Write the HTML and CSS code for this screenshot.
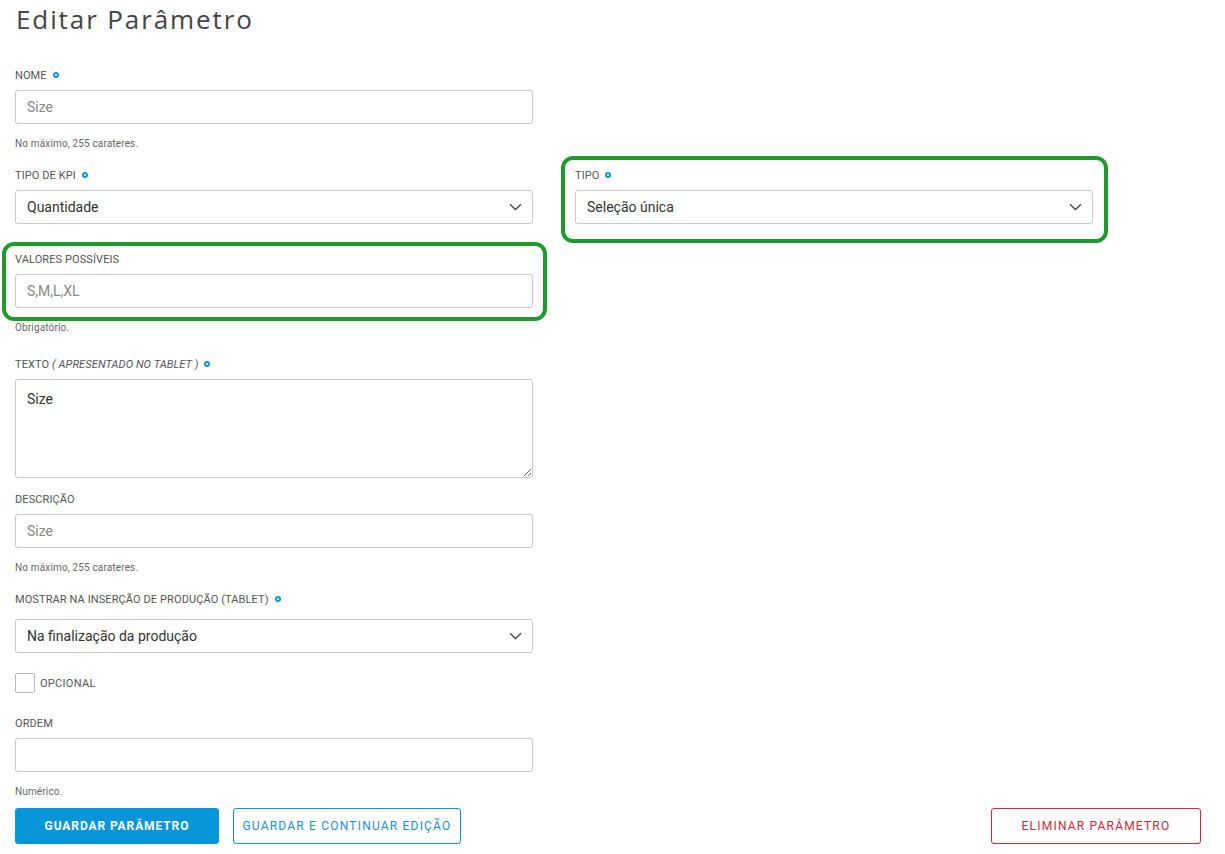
FILE: index.html
```html
<!DOCTYPE html>
<html lang="pt">
<head>
<meta charset="utf-8">
<title>Editar Parâmetro</title>
<link rel="stylesheet" href="styles.css">
</head>
<body>
<div class="page">
  <h1 class="title">Editar Parâmetro</h1>

  <div class="field field-nome">
    <div class="label">Nome <span class="req"></span></div>
    <div class="input placeholder">Size</div>
    <div class="help">No máximo, 255 carateres.</div>
  </div>

  <div class="row row-kpi">
    <div class="field col">
      <div class="label">Tipo de KPI <span class="req"></span></div>
      <div class="input select">Quantidade
        <svg class="chev" width="13" height="8" viewBox="0 0 13 8"><path d="M1 1.2l5.5 5.3L12 1.2" fill="none" stroke="#444" stroke-width="1.3"/></svg>
      </div>
    </div>
    <div class="field col">
      <div class="highlight hl-tipo">
        <div class="label">Tipo <span class="req"></span></div>
        <div class="input select">Seleção única
          <svg class="chev" width="13" height="8" viewBox="0 0 13 8"><path d="M1 1.2l5.5 5.3L12 1.2" fill="none" stroke="#444" stroke-width="1.3"/></svg>
        </div>
      </div>
    </div>
  </div>

  <div class="field field-valores">
    <div class="highlight hl-valores">
      <div class="label">Valores possíveis</div>
      <div class="input placeholder">S,M,L,XL</div>
    </div>
    <div class="help">Obrigatório.</div>
  </div>

  <div class="field field-texto">
    <div class="label">Texto <em>&nbsp;( Apresentado no tablet )</em> <span class="req"></span></div>
    <textarea class="textarea">Size</textarea>
  </div>

  <div class="field field-desc">
    <div class="label">Descrição</div>
    <div class="input placeholder">Size</div>
    <div class="help">No máximo, 255 carateres.</div>
  </div>

  <div class="field field-mostrar">
    <div class="label">Mostrar na inserção de produção (tablet) <span class="req"></span></div>
    <div class="input select">Na finalização da produção
      <svg class="chev" width="13" height="8" viewBox="0 0 13 8"><path d="M1 1.2l5.5 5.3L12 1.2" fill="none" stroke="#444" stroke-width="1.3"/></svg>
    </div>
  </div>

  <div class="check-row">
    <span class="checkbox"></span>
    <span class="check-label">Opcional</span>
  </div>

  <div class="field field-ordem">
    <div class="label">Ordem</div>
    <div class="input"></div>
    <div class="help">Numérico.</div>
  </div>

  <div class="actions">
    <div class="actions-left">
      <button class="btn btn-primary">Guardar parâmetro</button>
      <button class="btn btn-outline">Guardar e continuar edição</button>
    </div>
    <button class="btn btn-danger">Eliminar parâmetro</button>
  </div>
</div>
</body>
</html>
```

FILE: styles.css
```css
* { box-sizing: border-box; }

body {
  margin: 0;
  background: #fff;
  font-family: "Open Sans", "Noto Sans", sans-serif;
  color: #333;
}

.page {
  padding: 0 24px 0 15px;
}

.title {
  margin: 0 0 29px 1px;
  font-family: "Open Sans", sans-serif;
  font-weight: 400;
  font-size: 26px;
  line-height: 38px;
  letter-spacing: 1.9px;
  color: #444;
}

.field {
  width: 518px;
}

.label {
  display: flex;
  align-items: center;
  height: 16px;
  margin-bottom: 7px;
  font-family: "Roboto", "Liberation Sans", sans-serif;
  font-size: 11px;
  letter-spacing: 0.1px;
  text-transform: uppercase;
  color: #555;
  white-space: nowrap;
}

.label em {
  font-style: italic;
}

.req {
  display: inline-block;
  width: 6px;
  height: 6px;
  margin-left: 6px;
  border: 2px solid #0a96dc;
  border-radius: 50%;
}

.input {
  display: flex;
  align-items: center;
  height: 34px;
  padding: 0 11px;
  border: 1px solid #c9c9cc;
  border-radius: 3px;
  font-family: "Roboto", "Liberation Sans", sans-serif;
  font-size: 14px;
  color: #333;
  background: #fff;
}

.placeholder {
  color: #888;
}

.select {
  justify-content: space-between;
  padding-right: 10px;
}

.chev {
  display: block;
}

.help {
  margin-top: 13px;
  font-family: "Roboto", "Liberation Sans", sans-serif;
  font-size: 10px;
  line-height: 14px;
  letter-spacing: 0.15px;
  color: #666;
}

.field-nome { margin-bottom: 16px; }

.row {
  display: flex;
  gap: 42px;
}

.row-kpi { margin-bottom: 27px; }

.col { width: 518px; }

.highlight {
  border: 4px solid #1f9a2e;
  border-radius: 12px;
  background: #fff;
}

.hl-tipo {
  margin: -11px -15px -19px -14px;
  padding: 7px 11px 15px 10px;
}

.hl-valores {
  margin: -9px -14px -13px -13px;
  padding: 5px 10px 9px 9px;
}

.field-valores { margin-bottom: 21px; }

.textarea {
  display: block;
  width: 518px;
  height: 99px;
  padding: 11px 11px;
  border: 1px solid #c9c9cc;
  border-radius: 3px;
  font-family: "Roboto", "Liberation Sans", sans-serif;
  font-size: 14px;
  color: #333;
  resize: vertical;
  outline: none;
}

.field-texto { margin-bottom: 13px; }

.field-desc { margin-bottom: 16px; }

.field-mostrar .label { margin-bottom: 12px; }

.field-mostrar { margin-bottom: 20px; }

.check-row {
  display: flex;
  align-items: center;
  gap: 5px;
  height: 20px;
  margin-bottom: 22px;
}

.checkbox {
  width: 20px;
  height: 20px;
  border: 1px solid #b9b9bd;
  border-radius: 2px;
  background: #fff;
}

.check-label {
  font-family: "Roboto", "Liberation Sans", sans-serif;
  font-size: 11px;
  letter-spacing: 0.3px;
  text-transform: uppercase;
  color: #555;
}

.field-ordem { margin-bottom: 9px; }

.actions {
  display: flex;
  justify-content: space-between;
  align-items: center;
}

.actions-left {
  display: flex;
  gap: 14px;
}

.btn {
  height: 36px;
  padding: 0;
  border-radius: 3px;
  font-family: "Roboto", "Liberation Sans", sans-serif;
  font-size: 12px;
  letter-spacing: 1.2px;
  text-transform: uppercase;
  cursor: pointer;
}

.btn-primary {
  width: 204px;
  border: 1px solid #0796d8;
  background: #0796d8;
  color: #fff;
  font-weight: 700;
  letter-spacing: 0.9px;
}

.btn-outline {
  width: 228px;
  border: 1px solid #0796d8;
  background: #fff;
  color: #1b8fd2;
}

.btn-danger {
  width: 210px;
  border: 1px solid #d9283c;
  background: #fff;
  color: #d3263a;
}
```
